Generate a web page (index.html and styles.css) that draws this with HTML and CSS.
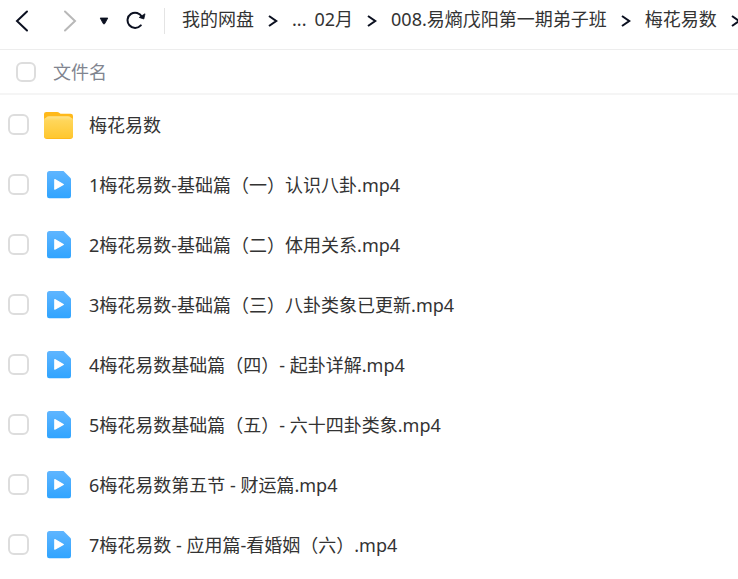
FILE: index.html
```html
<!DOCTYPE html>
<html lang="zh-CN">
  <head>
    <meta charset="UTF-8">
    <meta name="viewport" content="width=device-width, initial-scale=1.0">
    <title>我的网盘</title>
    <link rel="stylesheet" href="styles.css">
  </head>
  <body>
    <!-- Shared icons -->
    <svg class="sprite" width="0" height="0" aria-hidden="true">
      <defs>
        <linearGradient id="folderFront" x1="0" y1="0" x2="0" y2="1">
          <stop offset="0" stop-color="#ffe48c"/>
          <stop offset="0.2" stop-color="#ffd65a"/>
          <stop offset="1" stop-color="#ffc72e"/>
        </linearGradient>
        <linearGradient id="fileBlue" x1="0" y1="0" x2="0" y2="1">
          <stop offset="0" stop-color="#5fb5ff"/>
          <stop offset="1" stop-color="#30a4ff"/>
        </linearGradient>
      </defs>
      <symbol id="sep" viewBox="0 0 10 14">
        <path d="M1 2 L8.2 7 L1 12" fill="none" stroke="#0b1020" stroke-width="2.1"/>
      </symbol>
      <symbol id="folder" viewBox="0 0 30 30">
        <path d="M0 4 Q0 2 2.2 2 H13 Q14.5 2 15.5 3 L16.5 3.8 H26.5 Q29 3.8 29 6 V26 Q29 29 26 29 H3 Q0 29 0 26Z" fill="#ffb91a"/>
        <path d="M0 10 Q0 8.2 2 7.8 L3 6.8 Q3.5 6.3 5 6.3 H24 Q25.5 6.3 26 6.8 L27 7.8 Q29 8.2 29 10 V25.3 Q29 28.1 26.2 28.1 H2.8 Q0 28.1 0 25.3Z" fill="url(#folderFront)"/>
      </symbol>
      <symbol id="video" viewBox="0 0 30 30">
        <path d="M5.5 1 H19.5 L27 8.5 V26 Q27 28.2 24.8 28.2 H5.2 Q3 28.2 3 26 V3.5 Q3 1 5.5 1Z" fill="url(#fileBlue)"/>
        <path d="M10.8 9.6 L19.3 14.4 L10.8 19.2Z" fill="#fff" stroke="#fff" stroke-width="1.2" stroke-linejoin="round"/>
      </symbol>
    </svg>

    <header class="toolbar">
      <div class="nav">
        <button class="nav-button" type="button" aria-label="后退">
          <svg width="14" height="22" viewBox="0 0 14 22"><path d="M12 1.5 L2 11 L12 20.5" fill="none" stroke="#0b1020" stroke-width="2" stroke-linecap="round"/></svg>
        </button>
        <button class="nav-button forward" type="button" aria-label="前进">
          <svg width="14" height="22" viewBox="0 0 14 22"><path d="M2 1.5 L12 11 L2 20.5" fill="none" stroke="#b8b8b8" stroke-width="2" stroke-linecap="round"/></svg>
        </button>
        <button class="nav-button history" type="button" aria-label="历史记录">
          <svg width="10" height="8" viewBox="0 0 10 8"><path d="M1.2 1 H8.8 L5.8 6.6 Q5 7.6 4.2 6.6Z" fill="#0b1020" stroke="#0b1020" stroke-width="0.8" stroke-linejoin="round"/></svg>
        </button>
        <button class="nav-button refresh" type="button" aria-label="刷新">
          <svg width="20" height="20" viewBox="0 0 20 20">
            <path d="M14.8 14.4 A7.6 7.6 0 1 1 16 6" fill="none" stroke="#0b1020" stroke-width="2" stroke-linecap="round"/>
            <path d="M19 2.8 L17.8 8 L13.2 6.4Z" fill="#0b1020" stroke="#0b1020" stroke-width="0.8" stroke-linejoin="round"/>
          </svg>
        </button>
      </div>
      <nav class="breadcrumb" aria-label="路径">
        <a href="#">我的网盘</a>
        <svg class="sep"><use href="#sep"/></svg>
        <a class="more" href="#">...</a>
        <a href="#">02月</a>
        <svg class="sep"><use href="#sep"/></svg>
        <a href="#">008.易熵戊阳第一期弟子班</a>
        <svg class="sep"><use href="#sep"/></svg>
        <a href="#">梅花易数</a>
        <svg class="sep"><use href="#sep"/></svg>
      </nav>
    </header>

    <main>
      <div class="list-header">
        <input class="checkbox" type="checkbox" id="all">
        <label for="all">文件名</label>
      </div>
      <ul class="file-list">
        <li class="file-row">
          <input class="checkbox" type="checkbox" id="f0">
          <svg class="file-icon"><use href="#folder"/></svg>
          <label for="f0">梅花易数</label>
        </li>
        <li class="file-row">
          <input class="checkbox" type="checkbox" id="f1">
          <svg class="file-icon"><use href="#video"/></svg>
          <label for="f1">1梅花易数-基础篇（一）认识八卦.mp4</label>
        </li>
        <li class="file-row">
          <input class="checkbox" type="checkbox" id="f2">
          <svg class="file-icon"><use href="#video"/></svg>
          <label for="f2">2梅花易数-基础篇（二）体用关系.mp4</label>
        </li>
        <li class="file-row">
          <input class="checkbox" type="checkbox" id="f3">
          <svg class="file-icon"><use href="#video"/></svg>
          <label for="f3">3梅花易数-基础篇（三）八卦类象已更新.mp4</label>
        </li>
        <li class="file-row">
          <input class="checkbox" type="checkbox" id="f4">
          <svg class="file-icon"><use href="#video"/></svg>
          <label for="f4">4梅花易数基础篇（四）- 起卦详解.mp4</label>
        </li>
        <li class="file-row">
          <input class="checkbox" type="checkbox" id="f5">
          <svg class="file-icon"><use href="#video"/></svg>
          <label for="f5">5梅花易数基础篇（五）- 六十四卦类象.mp4</label>
        </li>
        <li class="file-row">
          <input class="checkbox" type="checkbox" id="f6">
          <svg class="file-icon"><use href="#video"/></svg>
          <label for="f6">6梅花易数第五节 - 财运篇.mp4</label>
        </li>
        <li class="file-row">
          <input class="checkbox" type="checkbox" id="f7">
          <svg class="file-icon"><use href="#video"/></svg>
          <label for="f7">7梅花易数 - 应用篇-看婚姻（六）.mp4</label>
        </li>
      </ul>
    </main>
  </body>
</html>
```

FILE: styles.css
```css
* {
    box-sizing: border-box;
}

body {
    margin: 0;
    font-family: "Noto Sans", "Noto Sans CJK SC", sans-serif;
    font-size: 18px;
    font-weight: 400;
    line-height: 24px;
    color: #333;
    background: #fff;
}

.sprite {
    position: absolute;
}

.toolbar {
    display: flex;
    align-items: center;
    height: 50px;
    padding: 0 0 7px 15px;
    border-bottom: 1px solid #ededed;
    overflow: hidden;
}

.nav {
    display: flex;
    align-items: center;
    flex-shrink: 0;
    height: 26px;
    padding-right: 18px;
    border-right: 1px solid #e4e4e4;
}

.nav-button {
    display: flex;
    padding: 0;
    border: none;
    background: none;
    cursor: pointer;
}

.forward {
    margin-left: 34px;
}

.history {
    margin-left: 22px;
}

.refresh {
    margin-left: 17px;
}

.breadcrumb {
    display: flex;
    align-items: center;
    flex: 1;
    min-width: 0;
    padding-left: 17px;
    overflow: hidden;
    white-space: nowrap;
}

.breadcrumb a {
    flex-shrink: 0;
    padding-bottom: 5px;
    color: #333;
    text-decoration: none;
}

.breadcrumb .more {
    margin-right: 8px;
}

.sep {
    flex-shrink: 0;
    width: 10px;
    height: 14px;
    margin: 0 14px;
}

.list-header {
    display: flex;
    align-items: center;
    gap: 17px;
    height: 45px;
    padding-left: 16px;
    border-bottom: 2px solid #f5f5f5;
    color: #818590;
}

.file-list {
    margin: 0;
    padding: 0;
    list-style: none;
}

.file-row {
    display: flex;
    align-items: center;
    gap: 15px;
    height: 60px;
    padding-left: 8px;
    white-space: nowrap;
}

.checkbox {
    appearance: none;
    flex-shrink: 0;
    width: 21px;
    height: 21px;
    margin: 0 0 1px;
    border: 2px solid #ddd;
    border-radius: 6px;
    background: #fff;
}

.list-header .checkbox {
    width: 20px;
    height: 20px;
    margin: 0;
}

.checkbox:checked {
    border-color: #30a4ff;
    background: #30a4ff;
}

.file-icon {
    flex-shrink: 0;
    width: 30px;
    height: 30px;
}
```
